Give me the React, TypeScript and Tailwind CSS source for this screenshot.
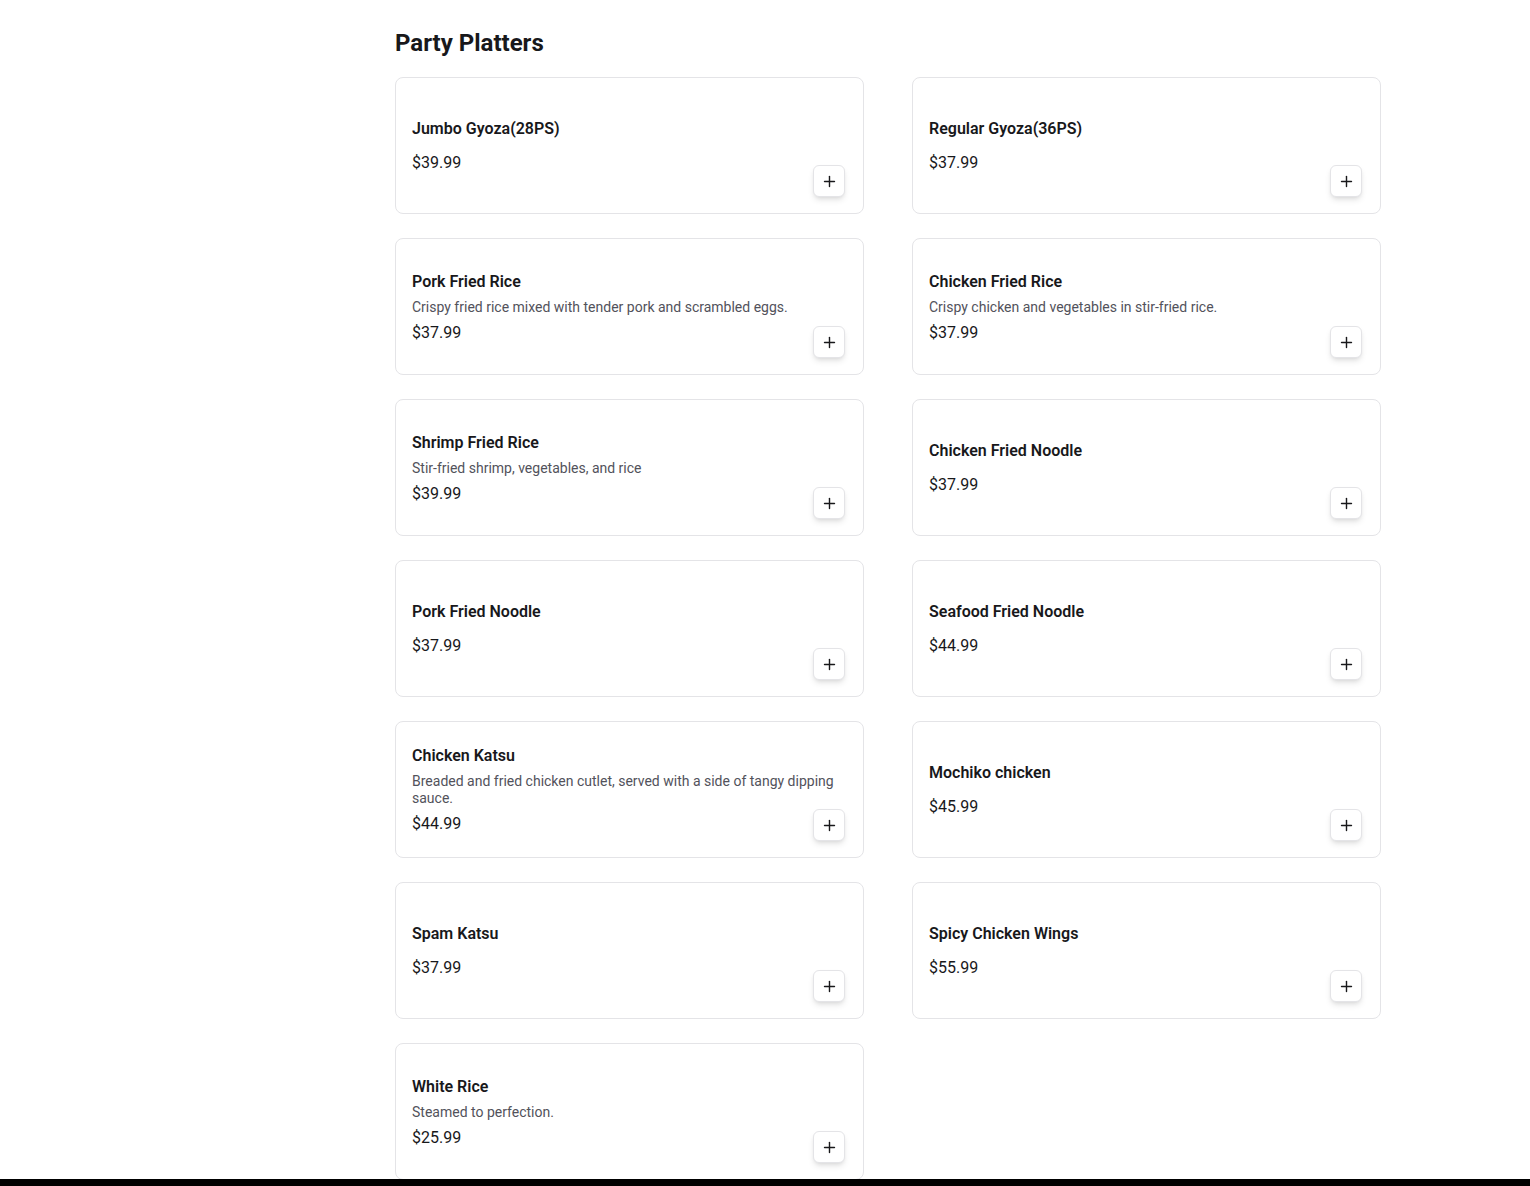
import { Plus } from "lucide-react";

type Item = {
  name: string;
  description?: string;
  price: string;
};

const items: Item[] = [
  { name: "Jumbo Gyoza(28PS)", price: "$39.99" },
  { name: "Regular Gyoza(36PS)", price: "$37.99" },
  {
    name: "Pork Fried Rice",
    description: "Crispy fried rice mixed with tender pork and scrambled eggs.",
    price: "$37.99",
  },
  {
    name: "Chicken Fried Rice",
    description: "Crispy chicken and vegetables in stir-fried rice.",
    price: "$37.99",
  },
  {
    name: "Shrimp Fried Rice",
    description: "Stir-fried shrimp, vegetables, and rice",
    price: "$39.99",
  },
  { name: "Chicken Fried Noodle", price: "$37.99" },
  { name: "Pork Fried Noodle", price: "$37.99" },
  { name: "Seafood Fried Noodle", price: "$44.99" },
  {
    name: "Chicken Katsu",
    description: "Breaded and fried chicken cutlet, served with a side of tangy dipping sauce.",
    price: "$44.99",
  },
  { name: "Mochiko chicken", price: "$45.99" },
  { name: "Spam Katsu", price: "$37.99" },
  { name: "Spicy Chicken Wings", price: "$55.99" },
  { name: "White Rice", description: "Steamed to perfection.", price: "$25.99" },
];

function MenuCard({ item }: { item: Item }) {
  return (
    <div className="relative flex h-[137px] flex-col justify-center rounded-lg border border-[#e4e4e7] bg-white p-4">
      <h3 className="mb-2 text-base font-semibold leading-[19px] text-[#18181b]">{item.name}</h3>
      <p className="mb-2 text-sm leading-[17px] text-[#52525b]">{item.description}</p>
      <p className="text-base leading-[18px] text-[#18181b]">{item.price}</p>

      {/* add to cart */}
      <button className="absolute bottom-4 right-[18px] flex h-8 w-8 items-center justify-center rounded-md border border-[#e4e4e7] bg-white text-[#18181b] shadow-md">
        <Plus className="h-[17px] w-[17px]" strokeWidth={2} />
      </button>
    </div>
  );
}

export default function App() {
  return (
    <div className="min-h-screen bg-white font-['Roboto',sans-serif]">
      <div className="mx-auto flex max-w-7xl gap-6 px-6">
        {/* Sidebar placeholder */}
        <aside className="w-[222px] shrink-0"></aside>

        <main className="flex-1 pb-10 pt-[27px]">
          <h2 className="mb-[18px] text-2xl font-bold leading-8 text-[#18181b]">Party Platters</h2>
          <div className="grid grid-cols-2 gap-x-12 gap-y-6">
            {items.map((item) => (
              <MenuCard key={item.name} item={item} />
            ))}
          </div>
        </main>
      </div>

      <div className="fixed bottom-0 left-0 right-0 h-[7px] bg-black"></div>
    </div>
  );
}
